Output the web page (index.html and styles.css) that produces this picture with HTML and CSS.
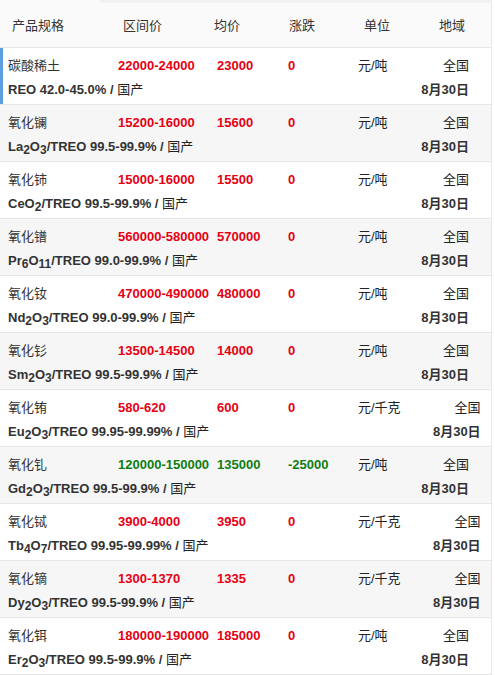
FILE: index.html
```html
<!DOCTYPE html>
<html lang="zh-CN">
<head>
<meta charset="utf-8">
<title>稀土价格</title>
<link rel="stylesheet" href="styles.css">
</head>
<body>
<div class="table">
  <div class="head">
    <div class="topstrip"></div>
    <div class="head-cells">
      <span>产品规格</span><span>区间价</span><span>均价</span><span>涨跌</span><span>单位</span><span>地域</span>
    </div>
  </div>

  <div class="row active">
    <span class="name">碳酸稀土</span><span class="num up">22000-24000</span><span class="num up">23000</span><span class="num up">0</span><span class="unit">元/吨</span><span class="region">全国</span>
    <span class="spec">REO 42.0-45.0% / <span class="cn">国产</span></span><span class="date">8月30日</span>
  </div>
  <div class="row alt">
    <span class="name">氧化镧</span><span class="num up">15200-16000</span><span class="num up">15600</span><span class="num up">0</span><span class="unit">元/吨</span><span class="region">全国</span>
    <span class="spec">La<sub>2</sub>O<sub>3</sub>/TREO 99.5-99.9% / <span class="cn">国产</span></span><span class="date">8月30日</span>
  </div>
  <div class="row">
    <span class="name">氧化铈</span><span class="num up">15000-16000</span><span class="num up">15500</span><span class="num up">0</span><span class="unit">元/吨</span><span class="region">全国</span>
    <span class="spec">CeO<sub>2</sub>/TREO 99.5-99.9% / <span class="cn">国产</span></span><span class="date">8月30日</span>
  </div>
  <div class="row alt">
    <span class="name">氧化镨</span><span class="num up">560000-580000</span><span class="num up">570000</span><span class="num up">0</span><span class="unit">元/吨</span><span class="region">全国</span>
    <span class="spec">Pr<sub>6</sub>O<sub>11</sub>/TREO 99.0-99.9% / <span class="cn">国产</span></span><span class="date">8月30日</span>
  </div>
  <div class="row">
    <span class="name">氧化钕</span><span class="num up">470000-490000</span><span class="num up">480000</span><span class="num up">0</span><span class="unit">元/吨</span><span class="region">全国</span>
    <span class="spec">Nd<sub>2</sub>O<sub>3</sub>/TREO 99.0-99.9% / <span class="cn">国产</span></span><span class="date">8月30日</span>
  </div>
  <div class="row alt">
    <span class="name">氧化钐</span><span class="num up">13500-14500</span><span class="num up">14000</span><span class="num up">0</span><span class="unit">元/吨</span><span class="region">全国</span>
    <span class="spec">Sm<sub>2</sub>O<sub>3</sub>/TREO 99.5-99.9% / <span class="cn">国产</span></span><span class="date">8月30日</span>
  </div>
  <div class="row">
    <span class="name">氧化铕</span><span class="num up">580-620</span><span class="num up">600</span><span class="num up">0</span><span class="unit">元/千克</span><span class="region">全国</span>
    <span class="spec">Eu<sub>2</sub>O<sub>3</sub>/TREO 99.95-99.99% / <span class="cn">国产</span></span><span class="date">8月30日</span>
  </div>
  <div class="row alt">
    <span class="name">氧化钆</span><span class="num down">120000-150000</span><span class="num down">135000</span><span class="num down">-25000</span><span class="unit">元/吨</span><span class="region">全国</span>
    <span class="spec">Gd<sub>2</sub>O<sub>3</sub>/TREO 99.5-99.9% / <span class="cn">国产</span></span><span class="date">8月30日</span>
  </div>
  <div class="row">
    <span class="name">氧化铽</span><span class="num up">3900-4000</span><span class="num up">3950</span><span class="num up">0</span><span class="unit">元/千克</span><span class="region">全国</span>
    <span class="spec">Tb<sub>4</sub>O<sub>7</sub>/TREO 99.95-99.99% / <span class="cn">国产</span></span><span class="date">8月30日</span>
  </div>
  <div class="row alt">
    <span class="name">氧化镝</span><span class="num up">1300-1370</span><span class="num up">1335</span><span class="num up">0</span><span class="unit">元/千克</span><span class="region">全国</span>
    <span class="spec">Dy<sub>2</sub>O<sub>3</sub>/TREO 99.5-99.9% / <span class="cn">国产</span></span><span class="date">8月30日</span>
  </div>
  <div class="row">
    <span class="name">氧化铒</span><span class="num up">180000-190000</span><span class="num up">185000</span><span class="num up">0</span><span class="unit">元/吨</span><span class="region">全国</span>
    <span class="spec">Er<sub>2</sub>O<sub>3</sub>/TREO 99.5-99.9% / <span class="cn">国产</span></span><span class="date">8月30日</span>
  </div>
</div>
</body>
</html>
```

FILE: styles.css
```css
* { box-sizing: border-box; }
html, body { margin: 0; padding: 0; background: #fff; }
body {
  font-family: "Liberation Sans", "Noto Sans CJK SC", sans-serif;
  font-size: 13px;
  color: #333;
}
.table {
  width: 492px;
  border-right: 1px solid #e8e8e8;
  overflow: hidden;
}
.head {
  height: 48px;
  background: #fafafa;
  border-bottom: 1px solid #e6e6e6;
}
.topstrip {
  height: 3px;
  margin-left: 100px;
  background: #f2f2f2;
}
.head-cells {
  display: grid;
  grid-template-columns: 111px 91px 75px 75px 75px 1fr;
  padding-left: 12px;
  line-height: 16px;
  padding-top: 15px;
  color: #333;
}
.row {
  display: grid;
  grid-template-columns: 110px 99px 71px 70px 1fr 80px;
  grid-template-rows: 16px 16px;
  row-gap: 8px;
  padding: 10px 22px 6px 8px;
  height: 57px;
  line-height: 16px;
  border-bottom: 1px solid #e6e6e6;
  background: #fff;
  white-space: nowrap;
}
.row.alt { background: #f6f6f6; }
.row.active { box-shadow: inset 3px 0 0 #5b9fe0; }
.name { color: #333; }
.num { font-weight: bold; }
.up { color: #e60012; }
.down { color: #0e7d12; }
.unit { color: #222; }
.region {
  text-align: right;
  color: #222;
}
.date {
  grid-column: 6;
  text-align: right;
  font-weight: bold;
  color: #333;
}
.spec {
  grid-column: 1 / 6;
  font-weight: bold;
  color: #333;
}
.spec .cn { font-weight: normal; color: #222; }
sub {
  font-size: 12px;
  vertical-align: -3px;
  line-height: 0;
}
```
